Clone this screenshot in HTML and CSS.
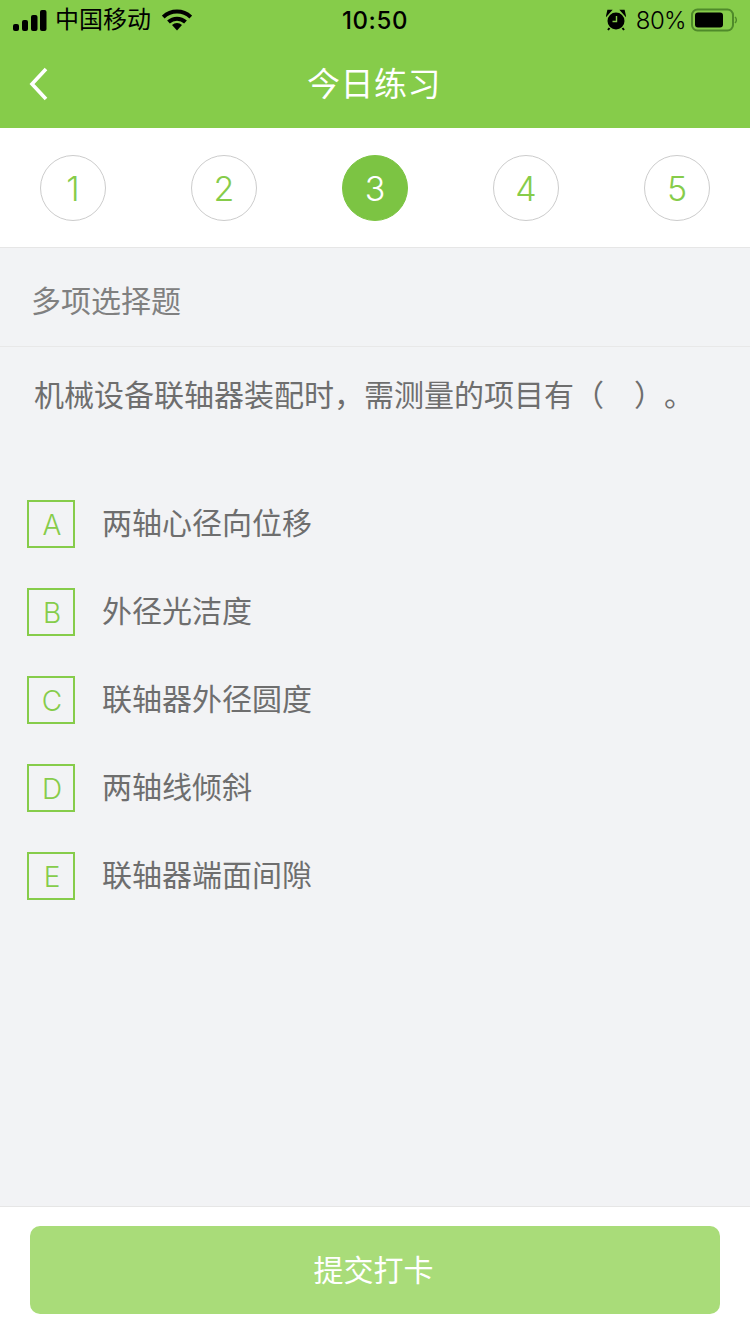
FILE: index.html
```html
<!DOCTYPE html>
<html lang="zh-CN">

<head>
    <meta charset="UTF-8">
    <meta name="viewport" content="width=device-width, initial-scale=1.0">
    <title>今日练习</title>
    <link rel="stylesheet" href="styles.css">
</head>

<body>
    <div class="page">
        <div class="top">
            <div class="status">
                <div class="status-left">
                    <svg class="signal" width="34" height="21" viewBox="0 0 34 21">
                        <rect x="0" y="14" width="6" height="7" rx="2" />
                        <rect x="9" y="10" width="6" height="11" rx="2" />
                        <rect x="18" y="5" width="6.5" height="16" rx="2" />
                        <rect x="27" y="0" width="6.5" height="21" rx="2" />
                    </svg>
                    <span class="carrier">中国移动</span>
                    <svg class="wifi" width="30" height="22" viewBox="0 0 30 22">
                        <path d="M1.2 8 A20 20 0 0 1 28.8 8" fill="none" stroke="#000" stroke-width="4" />
                        <path d="M6.5 13 A12.5 12.5 0 0 1 23.5 13" fill="none" stroke="#000" stroke-width="4" />
                        <path d="M10 16 A7.5 7.5 0 0 1 20 16 L15 21.5 Z" />
                    </svg>
                </div>
                <div class="time">10:50</div>
                <div class="status-right">
                    <svg class="alarm" width="20" height="22" viewBox="0 0 20 22">
                        <circle cx="10" cy="12" r="8.5" />
                        <path d="M1 6 L5 1.5 L2 1.5 Z M19 6 L15 1.5 L18 1.5 Z" stroke="#000" stroke-width="1.5" />
                        <path d="M3.5 19 L2 21 M16.5 19 L18 21" stroke="#000" stroke-width="2" />
                        <path d="M10.5 7 V12.5 H6.5" fill="none" stroke="#86cc4a" stroke-width="1.4" />
                    </svg>
                    <span class="percent">80%</span>
                    <svg class="battery" width="46" height="24" viewBox="0 0 46 24">
                        <rect x="1" y="1.5" width="41" height="21" rx="5.5" fill="none" stroke="#4f8a2a" stroke-width="2" />
                        <rect x="4" y="4.5" width="28" height="15" rx="3" />
                        <path d="M44 9 a4 4 0 0 1 0 6" fill="none" stroke="#4f8a2a" stroke-width="1.4" />
                    </svg>
                </div>
            </div>
            <div class="nav">
                <svg class="back" width="20" height="34" viewBox="0 0 20 34">
                    <path d="M17 2 L3 17 L17 32" fill="none" stroke="#fff" stroke-width="3.6" />
                </svg>
                <div class="nav-title">今日练习</div>
            </div>
        </div>

        <div class="steps">
            <div class="step">1</div>
            <div class="step">2</div>
            <div class="step active">3</div>
            <div class="step">4</div>
            <div class="step">5</div>
        </div>

        <div class="main">
            <div class="type">多项选择题</div>
            <div class="question">机械设备联轴器装配时，需测量的项目有（　）。</div>
            <ul class="options">
                <li class="option"><span class="letter">A</span><span class="option-text">两轴心径向位移</span></li>
                <li class="option"><span class="letter">B</span><span class="option-text">外径光洁度</span></li>
                <li class="option"><span class="letter">C</span><span class="option-text">联轴器外径圆度</span></li>
                <li class="option"><span class="letter">D</span><span class="option-text">两轴线倾斜</span></li>
                <li class="option"><span class="letter">E</span><span class="option-text">联轴器端面间隙</span></li>
            </ul>
        </div>

        <div class="bottom">
            <div class="submit">提交打卡</div>
        </div>
    </div>
</body>

</html>
```

FILE: styles.css
```css
* {
    margin: 0;
    padding: 0;
    list-style: none;
    box-sizing: border-box;
}

body {
    font-family: "Inter", "Noto Sans CJK SC", sans-serif;
    background: #f2f3f5;
}

.page {
    width: 750px;
    height: 1334px;
    display: flex;
    flex-direction: column;
    overflow: hidden;
}

.top {
    height: 128px;
    background: #86cc4a;
}

.status {
    height: 40px;
    display: flex;
    align-items: center;
    justify-content: space-between;
    padding: 0 13px;
    color: #000;
}

.status-left,
.status-right {
    width: 240px;
    display: flex;
    align-items: center;
}

.status-right {
    justify-content: flex-end;
}

.carrier {
    margin-left: 8px;
    font-size: 24px;
    line-height: 40px;
}

.wifi {
    margin-left: 11px;
}

.time {
    font-size: 24px;
    font-weight: 500;
    letter-spacing: 0.6px;
}

.percent {
    margin-left: 10px;
    margin-right: 5px;
    font-size: 24px;
    font-weight: 300;
    letter-spacing: -0.6px;
}

.nav {
    height: 88px;
    display: flex;
    align-items: center;
    justify-content: center;
    position: relative;
}

.back {
    position: absolute;
    left: 29px;
    top: 27px;
}

.nav-title {
    font-size: 33px;
    line-height: 84px;
    color: #fff;
    letter-spacing: 0.5px;
    padding-right: 2px;
}

.steps {
    height: 120px;
    background: #fff;
    border-bottom: 1px solid #e6e6e6;
    display: flex;
    align-items: center;
    justify-content: space-between;
    padding: 1px 40px 0;
}

.step {
    width: 66px;
    height: 66px;
    border: 1px solid #cccccc;
    border-radius: 50%;
    display: flex;
    align-items: center;
    justify-content: center;
    font-size: 34px;
    font-weight: 350;
    color: #86cc4a;
}

.step.active {
    background: #7cc443;
    border-color: #7cc443;
    color: #fff;
}

.main {
    flex: 1;
}

.type {
    height: 99px;
    border-bottom: 1px solid #e8e8e8;
    padding-left: 31px;
    font-size: 30px;
    line-height: 106px;
    color: #808080;
}

.question {
    padding: 22px 0 0 34px;
    font-size: 30px;
    line-height: 52px;
    color: #6e6e6e;
    text-spacing-trim: space-all;
}

.options {
    margin-top: 79px;
    padding-left: 27px;
}

.option {
    display: flex;
    align-items: center;
    height: 48px;
    margin-bottom: 40px;
}

.letter {
    width: 48px;
    height: 48px;
    border: 2px solid #86cc4a;
    padding: 1px 0 0 2px;
    display: flex;
    align-items: center;
    justify-content: center;
    font-size: 28px;
    font-weight: 350;
    color: #86cc4a;
}

.option-text {
    margin: 0 0 6px 27px;
    font-size: 30px;
    color: #6e6e6e;
}

.bottom {
    height: 128px;
    background: #fff;
    border-top: 1px solid #e6e6e6;
    padding: 19px 30px 0;
}

.submit {
    height: 88px;
    padding-right: 3px;
    border-radius: 10px;
    background: #a9dc79;
    color: #fff;
    font-size: 30px;
    line-height: 88px;
    text-align: center;
}
```
